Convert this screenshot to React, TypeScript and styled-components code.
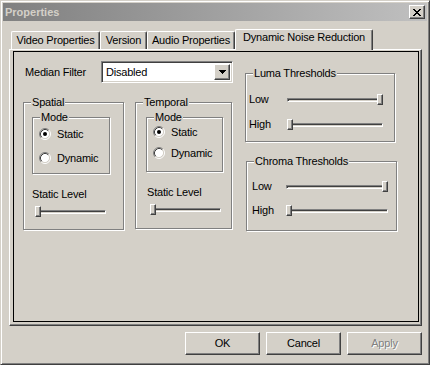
import React from "react";
import styled, { createGlobalStyle, css } from "styled-components";

const FACE = "#d4d0c8";
const LIGHT = "#ffffff";
const SHADOW = "#808080";
const DARK = "#404040";

const Global = createGlobalStyle`
  html, body { margin: 0; padding: 0; background: ${FACE}; }
  body { font-family: "Liberation Sans", Arial, sans-serif; font-size: 11px; letter-spacing: -0.2px; color: #000; }
  * { box-sizing: border-box; }
`;

const Window = styled.div`
  width: 430px;
  height: 365px;
  background: ${FACE};
  border: 1px solid;
  border-color: ${FACE} ${DARK} ${DARK} ${FACE};
  box-shadow: inset 1px 1px ${LIGHT}, inset -1px -1px ${SHADOW};
  padding: 2px;
  display: flex;
  flex-direction: column;
`;

const TitleBar = styled.div`
  flex: none;
  height: 18px;
  background: linear-gradient(to right, #808080, #c0c0c0);
  display: flex;
  align-items: center;
  justify-content: space-between;
  padding: 0 2px;
`;

const Title = styled.span`
  font-weight: bold;
  color: ${FACE};
  line-height: 13px;
  padding-top: 1px;
  letter-spacing: 0;
`;

const raised = css`
  background: ${FACE};
  border: 1px solid;
  border-color: ${LIGHT} ${DARK} ${DARK} ${LIGHT};
  box-shadow: inset -1px -1px ${SHADOW};
`;

const CloseButton = styled.div`
  ${raised};
  width: 16px;
  height: 14px;
  display: flex;
  align-items: center;
  justify-content: center;
  padding-right: 1px;
`;

const Body = styled.div`
  flex: 1;
  display: flex;
  flex-direction: column;
  padding: 8px 5px 7px 6px;
`;

const TabStrip = styled.div`
  flex: none;
  height: 20px;
  display: flex;
  align-items: flex-end;
  padding-left: 2px;
  position: relative;
  z-index: 1;
`;

const Tab = styled.div<{ $w: number; $active?: boolean }>`
  width: ${(p) => p.$w}px;
  height: ${(p) => (p.$active ? 21 : 18)}px;
  margin-bottom: ${(p) => (p.$active ? -1 : 0)}px;
  background: ${FACE};
  border-left: 1px solid ${LIGHT};
  border-top: 1px solid ${LIGHT};
  border-right: 1px solid ${DARK};
  border-radius: 2px 2px 0 0;
  box-shadow: inset -1px 0 ${SHADOW};
  display: flex;
  justify-content: center;
  align-items: flex-start;
  padding-top: ${(p) => (p.$active ? 1 : 2)}px;
  line-height: 13px;
  white-space: nowrap;
`;

const Panel = styled.div`
  flex: none;
  height: 277px;
  border: 1px solid;
  border-color: ${LIGHT} ${DARK} ${DARK} ${LIGHT};
  box-shadow: inset -1px -1px ${SHADOW};
  padding: 1px 2px 3px 3px;
  display: flex;
`;

const Page = styled.div`
  flex: 1;
  border: 1px solid #000;
  display: flex;
  align-items: flex-start;
  padding: 0 0 0 9px;
`;

const LeftColumn = styled.div`
  width: 210px;
  padding-top: 9px;
  display: flex;
  flex-direction: column;
`;

const RightColumn = styled.div`
  margin-left: 12px;
  padding-top: 21px;
  display: flex;
  flex-direction: column;
`;

const FieldRow = styled.div`
  height: 22px;
  display: flex;
  align-items: center;
`;

const FieldLabel = styled.span`
  width: 78px;
  padding-left: 2px;
  line-height: 13px;
`;

const Combo = styled.div`
  width: 132px;
  height: 22px;
  background: #fff;
  border: 1px solid;
  border-color: ${SHADOW} ${LIGHT} ${LIGHT} ${SHADOW};
  box-shadow: inset 1px 1px ${DARK}, inset -1px -1px ${FACE};
  padding: 2px;
  display: flex;
  align-items: stretch;
`;

const ComboText = styled.span`
  flex: 1;
  padding-left: 2px;
  line-height: 16px;
  display: flex;
  align-items: center;
`;

const ComboButton = styled.div`
  ${raised};
  width: 16px;
  display: flex;
  align-items: center;
  justify-content: center;
`;

const GroupsRow = styled.div`
  margin-top: 19px;
  display: flex;
  align-items: flex-start;
`;

const Group = styled.div<{
  $w: number;
  $h: number;
  $ml?: number;
  $mt?: number;
  $pad?: string;
}>`
  position: relative;
  width: ${(p) => p.$w}px;
  height: ${(p) => p.$h}px;
  margin-left: ${(p) => p.$ml ?? 0}px;
  margin-top: ${(p) => p.$mt ?? 0}px;
  border: 1px solid ${SHADOW};
  box-shadow: inset 1px 1px ${LIGHT}, 1px 1px ${LIGHT};
  padding: ${(p) => p.$pad ?? "0"};
  display: flex;
  flex-direction: column;
  align-items: flex-start;
`;

const GroupLabel = styled.span`
  position: absolute;
  top: -7px;
  left: 7px;
  padding: 0 1px;
  background: ${FACE};
  line-height: 13px;
  white-space: nowrap;
`;

const RadioList = styled.div<{ $gap: number }>`
  display: flex;
  flex-direction: column;
  gap: ${(p) => p.$gap}px;
`;

const RadioRow = styled.label`
  height: 12px;
  display: flex;
  align-items: center;
  gap: 6px;
  line-height: 12px;
`;

const LevelLabel = styled.span<{ $mt: number; $ml?: number }>`
  margin-top: ${(p) => p.$mt}px;
  margin-left: ${(p) => p.$ml ?? 0}px;
  line-height: 13px;
`;

const SliderBox = styled.div<{ $w: number; $mt?: number; $ml?: number }>`
  position: relative;
  width: ${(p) => p.$w}px;
  height: 11px;
  margin-top: ${(p) => p.$mt ?? 0}px;
  margin-left: ${(p) => p.$ml ?? 0}px;
  display: flex;
  align-items: center;
`;

const Track = styled.div`
  width: 100%;
  height: 4px;
  border: 1px solid;
  border-color: ${SHADOW} ${LIGHT} ${LIGHT} ${SHADOW};
  box-shadow: inset 1px 1px ${DARK};
  background: ${FACE};
`;

const Thumb = styled.div<{ $end?: boolean }>`
  ${raised};
  position: absolute;
  top: 0;
  ${(p) => (p.$end ? "right: 0;" : "left: 0;")}
  width: 6px;
  height: 11px;
`;

const ThresholdGrid = styled.div<{ $label: number; $slider: number; $gap: number }>`
  display: grid;
  grid-template-columns: ${(p) => p.$label}px ${(p) => p.$slider}px;
  row-gap: ${(p) => p.$gap}px;
  align-items: center;
`;

const RowLabel = styled.span`
  line-height: 11px;
`;

const ButtonRow = styled.div`
  margin-top: 6px;
  display: flex;
  justify-content: flex-end;
  gap: 6px;
`;

const Button = styled.button<{ $disabled?: boolean }>`
  ${raised};
  width: 75px;
  height: 23px;
  font: inherit;
  letter-spacing: inherit;
  line-height: 13px;
  padding: 0;
  color: ${(p) => (p.$disabled ? SHADOW : "#000")};
  text-shadow: ${(p) => (p.$disabled ? `1px 1px ${LIGHT}` : "none")};
`;

const RadioIcon = ({ checked }: { checked?: boolean }) => (
  <svg width="12" height="12" viewBox="0 0 12 12" style={{ flex: "none" }}>
    <circle cx="6" cy="6" r="4.5" fill="#fff" />
    <path d="M2.11 9.89 A5.5 5.5 0 0 1 9.89 2.11" stroke={SHADOW} fill="none" />
    <path d="M9.89 2.11 A5.5 5.5 0 0 1 2.11 9.89" stroke={LIGHT} fill="none" />
    <path d="M2.82 9.18 A4.5 4.5 0 0 1 9.18 2.82" stroke={DARK} fill="none" />
    <path d="M9.18 2.82 A4.5 4.5 0 0 1 2.82 9.18" stroke={FACE} fill="none" />
    {checked && <circle cx="6" cy="6" r="2" fill="#000" />}
  </svg>
);

const CloseGlyph = () => (
  <svg width="8" height="7" viewBox="0 0 8 7" shapeRendering="crispEdges">
    <path
      fill="#000"
      d="M0 0h2v1H0z M6 0h2v1H6z M1 1h2v1H1z M5 1h2v1H5z M2 2h4v1H2z M3 3h2v1H3z M2 4h4v1H2z M1 5h2v1H1z M5 5h2v1H5z M0 6h2v1H0z M6 6h2v1H6z"
    />
  </svg>
);

const ArrowGlyph = () => (
  <svg width="7" height="4" viewBox="0 0 7 4" shapeRendering="crispEdges">
    <path fill="#000" d="M0 0h7v1H0z M1 1h5v1H1z M2 2h3v1H2z M3 3h1v1H3z" />
  </svg>
);

const Slider = ({
  w,
  end,
  mt,
  ml,
}: {
  w: number;
  end?: boolean;
  mt?: number;
  ml?: number;
}) => (
  <SliderBox $w={w} $mt={mt} $ml={ml}>
    <Track />
    <Thumb $end={end} />
  </SliderBox>
);

export default function App() {
  return (
    <>
      <Global />
      <Window>
        <TitleBar>
          <Title>Properties</Title>
          <CloseButton>
            <CloseGlyph />
          </CloseButton>
        </TitleBar>
        <Body>
          <TabStrip>
            <Tab $w={89}>Video Properties</Tab>
            <Tab $w={47}>Version</Tab>
            <Tab $w={88}>Audio Properties</Tab>
            <Tab $w={138} $active>
              Dynamic Noise Reduction
            </Tab>
          </TabStrip>
          <Panel>
            <Page>
              <LeftColumn>
                <FieldRow>
                  <FieldLabel>Median Filter</FieldLabel>
                  <Combo>
                    <ComboText>Disabled</ComboText>
                    <ComboButton>
                      <ArrowGlyph />
                    </ComboButton>
                  </Combo>
                </FieldRow>
                <GroupsRow>
                  <Group $w={101} $h={128} $pad="14px 0 0 8px">
                    <GroupLabel>Spatial</GroupLabel>
                    <Group $w={78} $h={57} $pad="10px 0 0 6px">
                      <GroupLabel>Mode</GroupLabel>
                      <RadioList $gap={12}>
                        <RadioRow>
                          <RadioIcon checked />
                          Static
                        </RadioRow>
                        <RadioRow>
                          <RadioIcon />
                          Dynamic
                        </RadioRow>
                      </RadioList>
                    </Group>
                    <LevelLabel $mt={14}>Static Level</LevelLabel>
                    <Slider w={71} mt={5} ml={3} />
                  </Group>
                  <Group $w={97} $h={127} $ml={11} $pad="14px 0 0 10px">
                    <GroupLabel>Temporal</GroupLabel>
                    <Group $w={77} $h={55} $pad="8px 0 0 6px">
                      <GroupLabel>Mode</GroupLabel>
                      <RadioList $gap={9}>
                        <RadioRow>
                          <RadioIcon checked />
                          Static
                        </RadioRow>
                        <RadioRow>
                          <RadioIcon />
                          Dynamic
                        </RadioRow>
                      </RadioList>
                    </Group>
                    <LevelLabel $mt={14} $ml={1}>
                      Static Level
                    </LevelLabel>
                    <Slider w={71} mt={5} ml={4} />
                  </Group>
                </GroupsRow>
              </LeftColumn>
              <RightColumn>
                <Group $w={150} $h={69} $pad="20px 0 0 3px">
                  <GroupLabel>Luma Thresholds</GroupLabel>
                  <ThresholdGrid $label={38} $slider={96} $gap={14}>
                    <RowLabel>Low</RowLabel>
                    <Slider w={96} end />
                    <RowLabel>High</RowLabel>
                    <Slider w={96} />
                  </ThresholdGrid>
                </Group>
                <Group $w={151} $h={70} $ml={1} $mt={19} $pad="19px 0 0 5px">
                  <GroupLabel>Chroma Thresholds</GroupLabel>
                  <ThresholdGrid $label={34} $slider={102} $gap={13}>
                    <RowLabel>Low</RowLabel>
                    <Slider w={102} end />
                    <RowLabel>High</RowLabel>
                    <Slider w={102} />
                  </ThresholdGrid>
                </Group>
              </RightColumn>
            </Page>
          </Panel>
          <ButtonRow>
            <Button>OK</Button>
            <Button>Cancel</Button>
            <Button $disabled>Apply</Button>
          </ButtonRow>
        </Body>
      </Window>
    </>
  );
}
